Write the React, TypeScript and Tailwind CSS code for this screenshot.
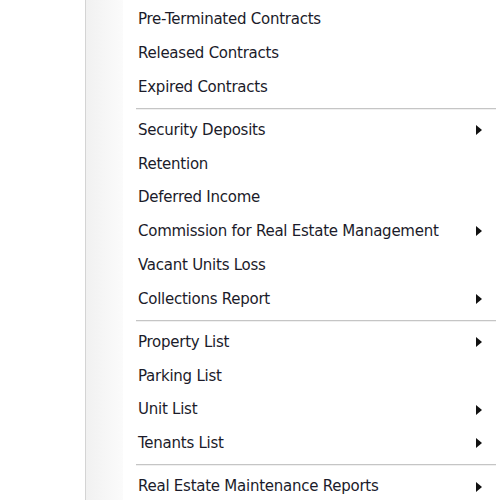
import React from 'react'

type Item = { label: string; sub?: boolean } | 'sep'

const items: Item[] = [
  { label: 'Pre-Terminated Contracts' },
  { label: 'Released Contracts' },
  { label: 'Expired Contracts' },
  'sep',
  { label: 'Security Deposits', sub: true },
  { label: 'Retention' },
  { label: 'Deferred Income' },
  { label: 'Commission for Real Estate Management', sub: true },
  { label: 'Vacant Units Loss' },
  { label: 'Collections Report', sub: true },
  'sep',
  { label: 'Property List', sub: true },
  { label: 'Parking List' },
  { label: 'Unit List', sub: true },
  { label: 'Tenants List', sub: true },
  'sep',
  { label: 'Real Estate Maintenance Reports', sub: true },
]

const Arrow = () => (
  <svg width="6" height="10" viewBox="0 0 6 10" className="shrink-0">
    <path d="M0 0 L6 5 L0 10 Z" fill="#111" />
  </svg>
)

const App: React.FC = () => {
  return (
    <div className="w-[500px] h-[500px] overflow-hidden bg-white flex">
      <div className="w-[85px] bg-white" />
      <div
        className="flex-1 flex border-l border-[#d4d4d4] bg-white"
        style={{ fontFamily: '"DejaVu Sans", Verdana, sans-serif' }}
      >
        {/* icon gutter */}
        <div className="w-[37px] shrink-0 bg-gradient-to-r from-[#f1f1f1] to-[#fbfbfb]" />
        <div className="flex-1 flex flex-col pt-[2.5px]">
          {items.map((item, i) =>
            item === 'sep' ? (
              <div key={i} className="h-[9.5px] shrink-0 flex items-center pl-[13px] pr-[4px]">
                <div className="w-full h-[2px] border-t border-[#c5c5c5] border-b border-b-[#f0f0f0]" />
              </div>
            ) : (
              <div
                key={i}
                className="h-[33.75px] shrink-0 flex items-center pl-[15px] pr-[18px] text-[15px] text-[#1b1b2a] tracking-[-0.25px]"
              >
                <span className="flex-1 whitespace-nowrap">{item.label}</span>
                {item.sub && <Arrow />}
              </div>
            )
          )}
        </div>
      </div>
    </div>
  )
}

export default App
